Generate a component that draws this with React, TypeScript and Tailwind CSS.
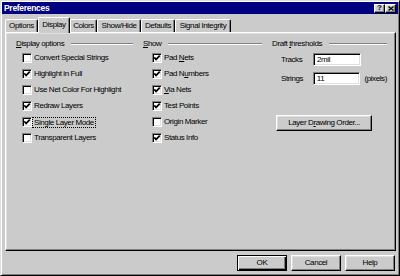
import React from 'react';

const raised =
  'border border-t-white border-l-white border-r-black border-b-black shadow-[inset_-1px_-1px_0_#808080,inset_1px_1px_0_#dfdfdf]';
const sunken =
  'border border-t-[#808080] border-l-[#808080] border-r-white border-b-white shadow-[inset_1px_1px_0_#000,inset_-1px_-1px_0_#dfdfdf]';

function Check({ checked }: { checked: boolean }) {
  return (
    <span className={`relative w-[10px] h-[10px] shrink-0 bg-white ${sunken}`}>
      {checked && (
        <svg className="absolute inset-0" width="8" height="8" viewBox="0 0 8 8">
          <path d="M1.3 3.4 L3.1 5.4 L6.8 1.6" fill="none" stroke="#000" strokeWidth="1.7" />
        </svg>
      )}
    </span>
  );
}

function Row({ checked, children, focus }: { checked: boolean; children: React.ReactNode; focus?: boolean }) {
  return (
    <div className="flex items-center h-[16px] gap-[2px]">
      <Check checked={checked} />
      {focus ? (
        <span className="-ml-[2px] px-[1px] border border-dotted border-black leading-[9px]">{children}</span>
      ) : (
        <span>{children}</span>
      )}
    </div>
  );
}

function GroupTitle({ children }: { children: React.ReactNode }) {
  return (
    <div className="flex items-center h-[12px]">
      <span>{children}</span>
      <div className="ml-[7px] flex-1 h-0 border-t border-t-[#808080] border-b border-b-white" />
    </div>
  );
}

const tabs = [
  { label: 'Options', w: 'w-[33px]' },
  { label: 'Display', w: 'w-[32px]', active: true },
  { label: 'Colors', w: 'w-[27px]' },
  { label: 'Show/Hide', w: 'w-[44px]' },
  { label: 'Defaults', w: 'w-[34px]' },
  { label: 'Signal Integrity', w: 'w-[56px]' },
];

export default function App() {
  return (
    <div className="w-[400px] h-[276px] bg-[#cbcbcb] border border-t-[#dfdfdf] border-l-[#dfdfdf] border-r-black border-b-black shadow-[inset_1px_1px_0_#fff,inset_-1px_-1px_0_#808080] p-[1px] flex flex-col text-black text-[8px] tracking-[-0.4px] leading-none whitespace-nowrap font-['Liberation_Sans',Arial,sans-serif]">
      {/* title bar */}
      <div className="h-[12px] bg-[#000080] flex items-center pl-[2px] pr-[2px]">
        <span className="text-white font-bold text-[8.5px] tracking-[-0.3px]">Preferences</span>
        <div className="ml-auto flex">
          <span className={`w-[11px] h-[9px] bg-[#cbcbcb] flex items-center justify-center font-bold text-[8px] tracking-normal ${raised}`}>?</span>
          <span className={`w-[11px] h-[9px] bg-[#cbcbcb] flex items-center justify-center ${raised}`}>
            <svg width="6" height="5" viewBox="0 0 6 5">
              <path d="M0.5 0.5 L5.5 4.5 M5.5 0.5 L0.5 4.5" stroke="#000" strokeWidth="1.3" />
            </svg>
          </span>
        </div>
      </div>

      {/* tabs */}
      <div className="mt-[3px] ml-[3px] mr-[2px] h-[15px] flex items-end">
        {tabs.map((t) =>
          t.active ? (
            <div
              key={t.label}
              className={`${t.w} relative z-10 h-[16px] -mb-[1px] bg-[#cbcbcb] rounded-t-[2px] border-l border-t border-r border-l-white border-t-white border-r-black shadow-[inset_-1px_0_0_#808080] flex items-center justify-center pb-[2px]`}
            >
              {t.label}
            </div>
          ) : (
            <div
              key={t.label}
              className={`${t.w} h-[13px] rounded-t-[2px] border-l border-t border-r border-l-white border-t-white border-r-black shadow-[inset_-1px_0_0_#808080] flex items-center justify-center`}
            >
              {t.label}
            </div>
          )
        )}
      </div>

      {/* panel */}
      <div className={`ml-[3px] mr-[2px] h-[219px] flex gap-[10px] pl-[10px] pt-[5px] ${raised}`}>
        <div className="w-[117px]">
          <GroupTitle>
            <u className="underline-offset-1">D</u>isplay options
          </GroupTitle>
          <div className="pl-[6px]">
            <Row checked={false}>Convert Special Strings</Row>
            <Row checked>Highlight in Full</Row>
            <Row checked={false}>Use Net Color For Highlight</Row>
            <Row checked>Redraw Layers</Row>
            <Row checked focus>Single Layer Mode</Row>
            <Row checked={false}>Transparent Layers</Row>
          </div>
        </div>

        <div className="w-[119px]">
          <GroupTitle>
            <u className="underline-offset-1">S</u>how
          </GroupTitle>
          <div className="pl-[9px]">
            <Row checked>
              Pad <u className="underline-offset-1">N</u>ets
            </Row>
            <Row checked>
              Pad N<u className="underline-offset-1">u</u>mbers
            </Row>
            <Row checked>
              <u className="underline-offset-1">V</u>ia Nets
            </Row>
            <Row checked>Test Points</Row>
            <Row checked={false}>Origin Marker</Row>
            <Row checked>Status Info</Row>
          </div>
        </div>

        <div className="w-[115px]">
          <GroupTitle>
            Draft <u className="underline-offset-1">t</u>hresholds
          </GroupTitle>
          <div className="ml-[9px] mt-[3px] flex items-center h-[13px]">
            <span className="w-[32px]">Tracks</span>
            <span className={`w-[48px] h-[13px] bg-white flex items-center pl-[3px] ${sunken}`}>2mil</span>
          </div>
          <div className="ml-[9px] mt-[6px] flex items-center h-[13px]">
            <span className="w-[32px]">Strings</span>
            <span className={`w-[48px] h-[13px] bg-white flex items-center pl-[3px] ${sunken}`}>11</span>
            <span className="ml-[4px]">(pixels)</span>
          </div>
          <div className={`ml-[4px] mt-[30px] w-[96px] h-[16px] flex items-center justify-center ${raised}`}>
            <span>
              Layer D<u className="underline-offset-1">r</u>awing Order...
            </span>
          </div>
        </div>
      </div>

      {/* buttons */}
      <div className="mt-[4px] mr-[3px] flex justify-end gap-[4px]">
        <div className="w-[50px] h-[16px] flex items-center justify-center border border-black shadow-[inset_1px_1px_0_#fff,inset_-1px_-1px_0_#000,inset_-2px_-2px_0_#808080]">
          OK
        </div>
        <div className={`w-[50px] h-[16px] flex items-center justify-center ${raised}`}>Cancel</div>
        <div className={`w-[50px] h-[16px] flex items-center justify-center ${raised}`}>Help</div>
      </div>
    </div>
  );
}
